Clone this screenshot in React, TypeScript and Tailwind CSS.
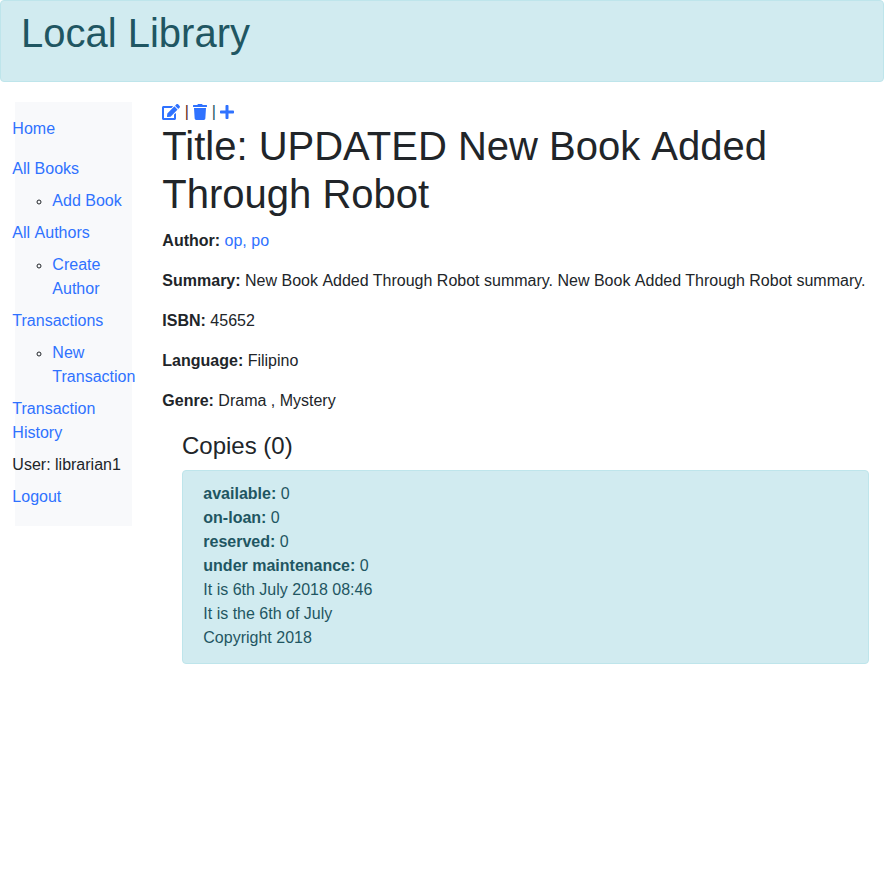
import React from 'react';
import { FaEdit, FaTrash, FaPlus } from 'react-icons/fa';

const link = 'text-[#2f72ff]';

export default function App() {
  return (
    <div className="min-h-[881px] bg-white font-['Liberation_Sans',Arial,sans-serif] text-base leading-6 text-[#212529]">
      <header className="mb-5 h-[82px] rounded border border-[#bee5eb] bg-[#d1ebf0] px-5 pt-2">
        <h1 className="text-[40px] leading-12 text-[#1f5662]">Local Library</h1>
      </header>
      <div className="flex items-start">
        <nav className="ml-[15px] h-[424px] w-[117px] shrink-0 bg-[#f8f9fb] pt-[15px]">
          <ul className="-ml-[2.67px]">
            <li className="mb-4"><a className={link}>Home</a></li>
            <li><a className={link}>All Books</a></li>
            <SubItem>Add Book</SubItem>
            <li><a className={link}>All <Word>Authors</Word></a></li>
            <SubItem>Create<br />Author</SubItem>
            <li><a className={link}>Transactions</a></li>
            <SubItem>New<br />Transaction</SubItem>
            <li><a className={link}>Transaction<br />History</a></li>
            <li className="my-2 whitespace-nowrap">User: librarian1</li>
            <li><a className={link}>Logout</a></li>
          </ul>
        </nav>
        <main className="ml-[30.33px] w-[706.67px] shrink-0">
          <div className="flex h-5 items-center text-[#2f72ff]">
            <FaEdit className="h-4 w-[18px]" />
            <span className="mr-[4.45px] ml-[4.45px] text-[#5e2a1b]">|</span>
            <FaTrash className="h-4 w-[14px]" />
            <span className="mr-[4.45px] ml-[4.45px] text-[#1b5561]">|</span>
            <FaPlus className="h-4 w-[14px]" />
          </div>
          <h1 className="mb-2 text-[40px] leading-12">Title: UPDATED New Book <Word>Added</Word><br />Through Robot</h1>
          <div className="pt-[3px]">
            <p className="mb-4"><strong>Author:</strong> <a className={link}>op, po</a></p>
            <p className="mb-4 whitespace-nowrap"><strong>Summary:</strong> New Book <Word>Added</Word> Through Robot summary. New Book <Word>Added</Word> Through Robot summary.</p>
            <p className="mb-4"><strong>ISBN:</strong> 45652</p>
            <p className="mb-4"><strong>Language:</strong> Filipino</p>
            <p className="mb-4"><strong>Genre:</strong> Drama , Mystery</p>
          </div>
          <section className="ml-[19.67px]">
            <h2 className="mb-[10px] pt-0.5 text-2xl leading-[29px]">Copies (0)</h2>
            <div className="h-[194px] rounded border border-[#bee5eb] bg-[#d1ebf0] px-[20.33px] pt-[11px] text-[#1f5662]">
              <p><strong>available:</strong> 0</p>
              <p><strong>on-loan:</strong> 0</p>
              <p><strong>reserved:</strong> 0</p>
              <p><strong>under maintenance:</strong> 0</p>
              <p>It is 6th July 2018 08:46</p>
              <p>It is the 6th of July</p>
              <p>Copyright 2018</p>
            </div>
          </section>
        </main>
      </div>
    </div>
  );
}

// Keeps a word out of the kerning with the space before it.
function Word({ children }: { children: React.ReactNode }) {
  return <span className="inline-block">{children}</span>;
}

function SubItem({ children }: { children: React.ReactNode }) {
  return (
    <li className="my-2 flex">
      <svg className="mt-[10px] mr-[10px] ml-6 size-[6px] shrink-0" viewBox="0 0 6 6">
        <circle cx="3" cy="3" r="2" fill="none" stroke="#212529" />
      </svg>
      <a className="text-[#2f72ff]">{children}</a>
    </li>
  );
}
